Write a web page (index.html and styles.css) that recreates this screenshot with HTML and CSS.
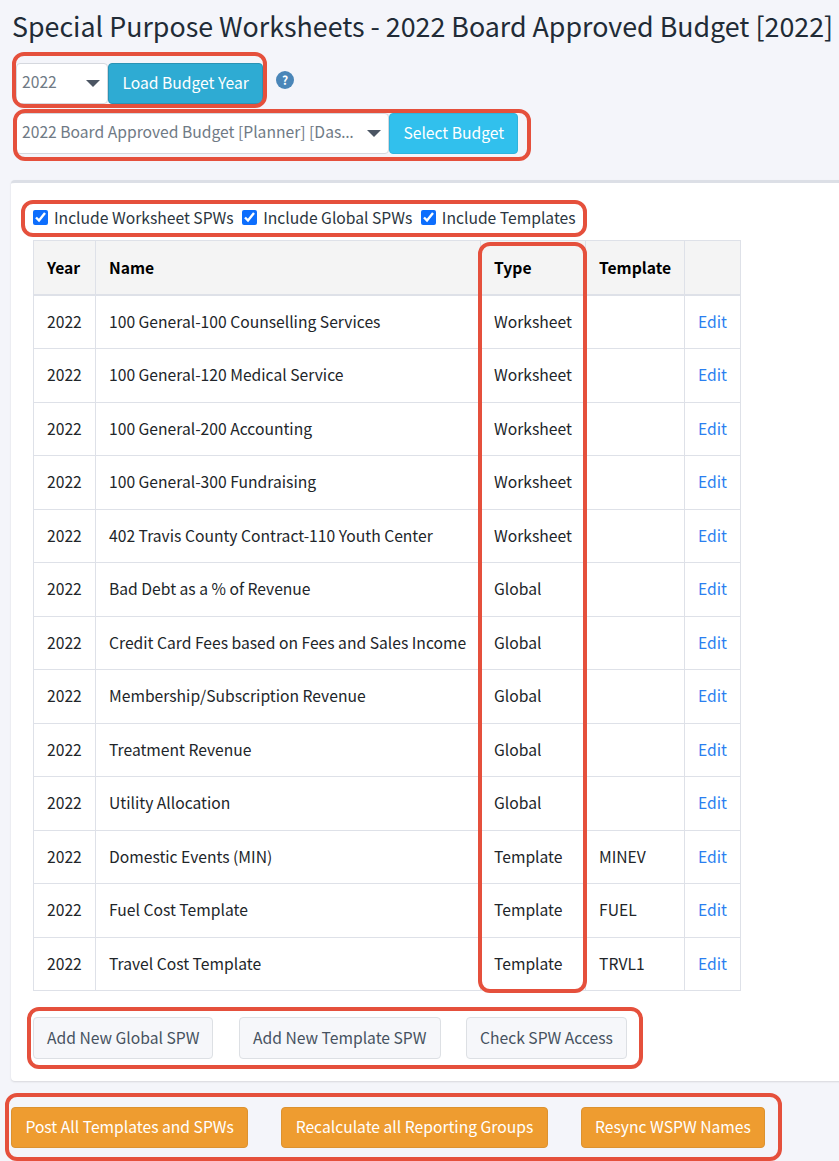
FILE: index.html
```html
<!DOCTYPE html>
<html lang="en">
<head>
<meta charset="utf-8">
<title>Special Purpose Worksheets</title>
<link rel="stylesheet" href="styles.css">
</head>
<body>
<main class="page">
  <h1 class="title">Special Purpose Worksheets - 2022 Board Approved Budget [2022]</h1>
  <div class="year-row">
    <div class="select year-select"><span class="select-text">2022</span><span class="caret"></span></div>
    <button class="btn btn-load">Load Budget Year</button>
    <span class="help">?</span>
  </div>
  <div class="budget-row">
    <div class="select budget-select"><span class="select-text">2022 Board Approved Budget [Planner] [Das<span class="dots">…</span></span><span class="caret"></span></div>
    <button class="btn btn-select">Select Budget</button>
  </div>
  <section class="card">
    <div class="filters">
      <label class="check"><input type="checkbox" checked>Include Worksheet SPWs</label>
      <label class="check"><input type="checkbox" checked>Include Global SPWs</label>
      <label class="check"><input type="checkbox" checked>Include Templates</label>
    </div>
    <table class="grid">
      <thead>
        <tr><th class="c-year">Year</th><th class="c-name">Name</th><th class="c-type">Type</th><th class="c-tpl">Template</th><th class="c-act"></th></tr>
      </thead>
      <tbody>
        <tr><td>2022</td><td>100 General-100 Counselling Services</td><td>Worksheet</td><td></td><td><a href="#">Edit</a></td></tr>
        <tr><td>2022</td><td>100 General-120 Medical Service</td><td>Worksheet</td><td></td><td><a href="#">Edit</a></td></tr>
        <tr><td>2022</td><td>100 General-200 Accounting</td><td>Worksheet</td><td></td><td><a href="#">Edit</a></td></tr>
        <tr><td>2022</td><td>100 General-300 Fundraising</td><td>Worksheet</td><td></td><td><a href="#">Edit</a></td></tr>
        <tr><td>2022</td><td>402 Travis County Contract-110 Youth Center</td><td>Worksheet</td><td></td><td><a href="#">Edit</a></td></tr>
        <tr><td>2022</td><td>Bad Debt as a % of Revenue</td><td>Global</td><td></td><td><a href="#">Edit</a></td></tr>
        <tr><td>2022</td><td>Credit Card Fees based on Fees and Sales Income</td><td>Global</td><td></td><td><a href="#">Edit</a></td></tr>
        <tr><td>2022</td><td>Membership/Subscription Revenue</td><td>Global</td><td></td><td><a href="#">Edit</a></td></tr>
        <tr><td>2022</td><td>Treatment Revenue</td><td>Global</td><td></td><td><a href="#">Edit</a></td></tr>
        <tr><td>2022</td><td>Utility Allocation</td><td>Global</td><td></td><td><a href="#">Edit</a></td></tr>
        <tr><td>2022</td><td>Domestic Events (MIN)</td><td>Template</td><td>MINEV</td><td><a href="#">Edit</a></td></tr>
        <tr><td>2022</td><td>Fuel Cost Template</td><td>Template</td><td>FUEL</td><td><a href="#">Edit</a></td></tr>
        <tr><td>2022</td><td>Travel Cost Template</td><td>Template</td><td>TRVL1</td><td><a href="#">Edit</a></td></tr>
      </tbody>
    </table>
    <div class="card-actions">
      <button class="btn btn-light">Add New Global SPW</button>
      <button class="btn btn-light">Add New Template SPW</button>
      <button class="btn btn-light">Check SPW Access</button>
    </div>
  </section>
  <div class="page-actions">
    <button class="btn btn-orange">Post All Templates and SPWs</button>
    <button class="btn btn-orange">Recalculate all Reporting Groups</button>
    <button class="btn btn-orange">Resync WSPW Names</button>
  </div>
</main>
<div class="mark mark-year"></div>
<div class="mark mark-budget"></div>
<div class="mark mark-filters"></div>
<div class="mark mark-type"></div>
<div class="mark mark-card-actions"></div>
<div class="mark mark-page-actions"></div>
</body>
</html>
```
FILE: styles.css
```css
* { box-sizing: border-box; }
html, body { margin: 0; padding: 0; height: 1161px; overflow: hidden; }
body {
  position: relative;
  width: 839px;
  background: #f4f5fa;
  color: #212529;
  font-family: "Noto Sans CJK KR", "Noto Sans", sans-serif;
  font-size: 15.67px;
  line-height: 24px;
}
.page { width: 900px; padding: 0 0 0 11px; }
.title {
  margin: 0;
  height: 63px;
  padding-top: 6px;
  padding-left: 1px;
  font-size: 26.8px;
  line-height: 40px;
  font-weight: 400;
  color: #212b36;
  white-space: nowrap;
}
.year-row, .budget-row { display: flex; align-items: flex-start; margin-left: 5px; }
.year-row { height: 50px; }
.budget-row { height: 67px; }
.select {
  display: flex;
  align-items: center;
  justify-content: space-between;
  height: 41px;
  padding: 0 7px 3px 5px;
  background: #fff;
  border: 1px solid #d5d8de;
  border-radius: 4px;
  color: #6f7a85;
}
.year-select { width: 92px; }
.budget-select { width: 373px; }
.select-text { white-space: nowrap; }
.dots { font-family: "Noto Sans", sans-serif; }
.caret {
  margin-top: 3px;
  border-left: 7px solid transparent;
  border-right: 7px solid transparent;
  border-top: 7px solid #4b5563;
}
.btn {
  height: 41px;
  padding: 0 13.4px 1px;
  border-radius: 4px;
  border: 1px solid transparent;
  font: inherit;
  white-space: nowrap;
}
.btn-load { width: 155px; background: #2eabd3; border-color: #2a93b5; color: #fff; }
.btn-select { width: 129px; background: #31c0ed; border-color: #2fb3dc; color: #fff; }
.help {
  width: 18px;
  height: 18px;
  margin: 8px 0 0 13px;
  border-radius: 50%;
  background: #4a86b8;
  color: #fff;
  font-size: 12px;
  font-weight: 700;
  line-height: 17px;
  text-align: center;
}
.card {
  height: 901px;
  padding: 17px 22px 0;
  background: #fff;
  border-top: 3px solid #dcdfe6;
  border-radius: 4px;
  box-shadow: 0 1px 2px rgba(0, 0, 0, .12);
}
.filters { display: flex; gap: 8.5px; height: 40px; padding-top: 6px; }
.check { display: flex; align-items: flex-start; gap: 6px; height: 24px; color: #2b3640; }
.check input { width: 15px; height: 15px; margin: 4px 0 0; accent-color: #0d6efd; }
.grid { width: 708px; border-collapse: collapse; table-layout: fixed; color: #212529; }
.grid th, .grid td {
  padding: 0 12px 0 13px;
  border: 1px solid #dee1e8;
  text-align: left;
  white-space: nowrap;
}
.grid th { height: 54.5px; background: #f4f4f4; color: #000; font-weight: 700; border-bottom-width: 2px; }
.grid td { height: 53.5px; }
.c-year { width: 62px; }
.c-name { width: 385px; }
.c-type { width: 105px; }
.c-tpl { width: 99px; }
.grid a { color: #2b7ff0; text-decoration: none; }
.card-actions { display: flex; gap: 25.5px; margin-top: 26px; }
.btn-light { background: #f6f7fa; border-color: #dde0e4; color: #46525f; height: 42px; padding: 0 13px; }
.page-actions { display: flex; gap: 33px; margin-top: 26px; }
.btn-orange { background: #ee9c30; border-color: #dc9230; color: #fff; }
.mark {
  position: absolute;
  border: 4px solid #e5503c;
  border-radius: 12px;
  pointer-events: none;
}
.mark-year { left: 12px; top: 52px; width: 255px; height: 56px; }
.mark-budget { left: 13px; top: 109px; width: 518px; height: 52px; }
.mark-filters { left: 21px; top: 200px; width: 566px; height: 37px; }
.mark-type { left: 478px; top: 242px; width: 109px; height: 751px; }
.mark-card-actions { left: 27px; top: 1007px; width: 616px; height: 62px; }
.mark-page-actions { left: 5px; top: 1093px; width: 777px; height: 68px; }
```
